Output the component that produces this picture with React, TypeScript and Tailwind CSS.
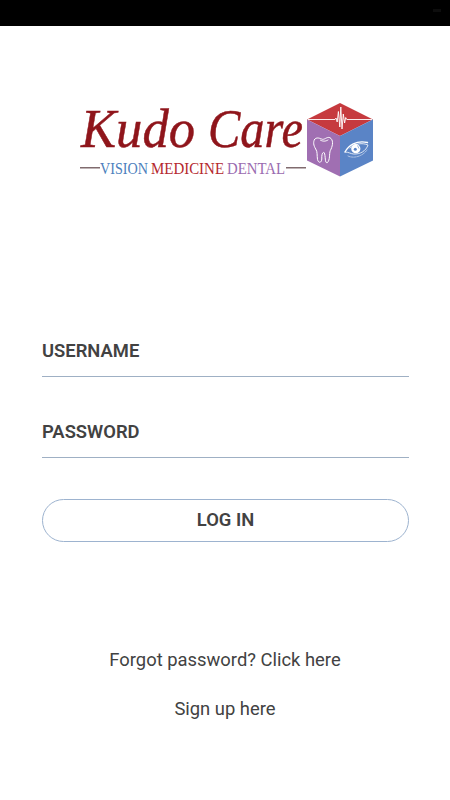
const FIELDS = [
  { id: "username", label: "USERNAME" },
  { id: "password", label: "PASSWORD" },
];

const TAGLINE = [
  { word: "VISION", x: 21, width: 48, color: "#4d7fbd" },
  { word: "MEDICINE", x: 72, width: 73, color: "#b5282e" },
  { word: "DENTAL", x: 148, width: 58, color: "#9a6bb0" },
];

function Cube() {
  return (
    <g>
      <path d="M261 1 294 17.5 261 34 228 17.5Z" fill="#c63a3e" />
      <path d="M228 17.5 261 34V74.5L228 58.5Z" fill="#a06fb2" />
      <path d="M294 17.5 261 34V74.5L294 58.5Z" fill="#5a84c6" />

      {/* Heartbeat */}
      <path
        d="M229 17.5H256L257 16 258.2 20 259.4 9.5 260.8 25 261.8 5 263 27 264.3 12 265.6 21 266.7 15.5 267.8 17.5H293"
        fill="none"
        stroke="#fff"
        strokeWidth="0.9"
        strokeLinejoin="round"
      />

      {/* Tooth */}
      <path
        d="M235.5 37.5C237.5 34.5 241 36.5 243.5 37.3C246 37.7 249 33.5 252 36.5C254.8 39.5 253.3 45 251.3 48.5C250 52 251.3 58 248.3 60.7C245.5 61.5 246.8 53.5 245.2 50.7C243.5 49.5 242.5 53 242.8 57C242.5 61 239.5 61.5 238.5 57.5C237.8 53 238.7 50 236.7 47C234.5 43.5 234 40 235.5 37.5ZM241.5 38.2C244.5 40 247.5 39 249 38"
        fill="none"
        stroke="#fff"
        strokeWidth="1"
        strokeLinecap="round"
      />

      {/* Eye */}
      <g fill="none" stroke="#fff" strokeLinecap="round">
        <path d="M266 50C269.5 43.5 277 38 288.5 40.5" strokeWidth="1.3" />
        <path d="M271 46C276 41.5 283 40.5 289 43C287 49 281 52.5 274.5 52C271.5 51.8 270 50 266 50" strokeWidth="0.8" />
        <path d="M269 54C274 56.5 283 55 288 48" strokeWidth="0.5" strokeDasharray="2 1" />
      </g>
      <circle cx="276.8" cy="46.7" r="4.6" fill="#fff" />
      <circle cx="276.3" cy="47.2" r="1.5" fill="#5a84c6" />
      <path d="M278.5 43.5 280 46.5" stroke="#5a84c6" strokeWidth="0.6" />
    </g>
  );
}

function Logo() {
  return (
    <svg width="296" height="76" viewBox="0 0 296 76" className="block overflow-visible">
      <g
        fill="#8f151b"
        stroke="#8f151b"
        strokeWidth="0.5"
        fontSize="54"
        fontStyle="italic"
        fontFamily="'Monotype Corsiva', 'Liberation Serif', serif"
      >
        <text x="2" y="45" textLength="114" lengthAdjust="spacingAndGlyphs">
          Kudo
        </text>
        <text x="129" y="45" textLength="95" lengthAdjust="spacingAndGlyphs">
          Care
        </text>
      </g>

      <path d="M1 65.7H21M207 65.7H227" stroke="#806b6e" strokeWidth="1.4" />
      {TAGLINE.map((t) => (
        <text
          key={t.word}
          x={t.x}
          y="71.5"
          fill={t.color}
          fontSize="16.5"
          fontFamily="'Liberation Serif', serif"
          textLength={t.width}
          lengthAdjust="spacingAndGlyphs"
        >
          {t.word}
        </text>
      ))}

      <Cube />
    </svg>
  );
}

export default function App() {
  return (
    <div className="flex h-[800px] w-[450px] flex-col bg-white font-['Roboto',sans-serif] text-[#424242]">
      <div className="flex h-[26px] shrink-0 justify-end bg-black pt-[9px] pr-[9px]">
        <div className="h-[3px] w-2 bg-[#0d0d0d]" />
      </div>

      <div className="mt-[76px] pl-[79px]">
        <Logo />
      </div>

      <main className="mt-[153px] flex flex-col pr-[41px] pl-[42px]">
        {FIELDS.map((f) => (
          <div
            key={f.id}
            className="mb-[35px] flex h-[46px] items-start border-b border-[#9fb0c4] pt-2 text-[18.4px] leading-6 font-semibold"
          >
            {f.label}
          </div>
        ))}

        <button className="mt-[6px] h-[42.5px] rounded-full border border-[#9db3cf] pb-px text-[18.4px] leading-6 font-semibold">
          LOG IN
        </button>
      </main>

      <footer className="mt-[105.5px] flex flex-col items-center gap-6 text-[18.4px] leading-[25px]">
        <a>Forgot password? Click here</a>
        <a>Sign up here</a>
      </footer>
    </div>
  );
}
